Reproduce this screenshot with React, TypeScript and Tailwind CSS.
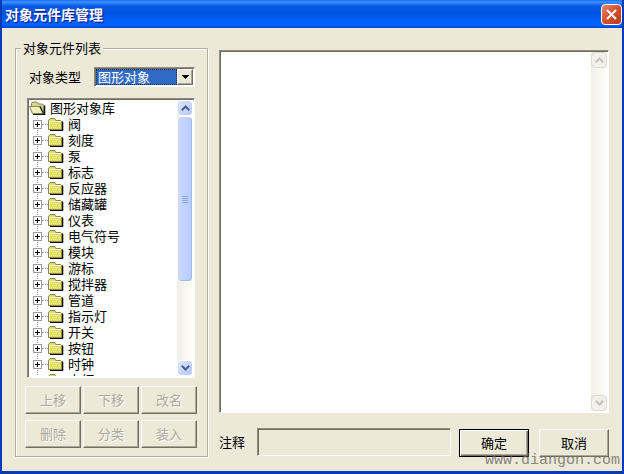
import { useState } from 'react'
import clsx from 'clsx'

const GROUPS = [
  '阀', '刻度', '泵', '标志', '反应器', '储藏罐', '仪表', '电气符号', '模块',
  '游标', '搅拌器', '管道', '指示灯', '开关', '按钮', '时钟', '电灯',
]

const ACTIONS = ['上移', '下移', '改名', '删除', '分类', '装入']

const SUNKEN = 'border border-t-[#8d8a7b] border-l-[#8d8a7b] border-r-white border-b-white shadow-[inset_1px_1px_0_#716f64]'
const RAISED = 'border border-t-white border-l-white border-r-[#716f64] border-b-[#716f64] shadow-[inset_-1px_-1px_0_#aca899]'

function FolderIcon() {
  return (
    <svg width="16" height="14" viewBox="0 0 16 14" className="shrink-0">
      <path d="M2 13.5h12.5V4.5" fill="none" stroke="#111" strokeWidth="1.6" />
      <path d="M.5 12.5v-9l1.5-2h4.5l1.5 2h4.5l1 1v8z" fill="#dfdc5e" stroke="#85854c" />
      <path d="M1.5 11.5V4.5h11" fill="none" stroke="#f8f8c4" />
      <path
        d="M3 6.5h10M4 8.5h9M3 10.5h10"
        stroke="#f3f1a0"
        strokeDasharray="1 1"
        shapeRendering="crispEdges"
      />
    </svg>
  )
}

function OpenFolderIcon() {
  return (
    <svg width="17" height="14" viewBox="0 0 17 14" className="shrink-0">
      <path d="M4 13.2h11.5V4.5" fill="none" stroke="#111" strokeWidth="1.6" />
      <path d="M2.5 11V2.5l1-1.5H8l1.5 2h4l1 1v8.500z" fill="#d6d48c" stroke="#85855a" />
      <path d="M.5 5.500h10.500l3.500 7H3.500z" fill="#efeeb4" stroke="#85855a" />
      <path d="M11 5.500l3.500 7" stroke="#222" strokeWidth="1.4" />
    </svg>
  )
}

function PlusBox() {
  return (
    <svg width="9" height="9" viewBox="0 0 9 9" shapeRendering="crispEdges" className="shrink-0">
      <rect x=".5" y=".5" width="8" height="8" fill="#fff" stroke="#9a9a9a" />
      <path d="M2 4.500h5M4.500 2v5" stroke="#000" />
    </svg>
  )
}

function Chevron({ up }: { up?: boolean }) {
  return (
    <svg width="9" height="6" viewBox="0 0 9 6" fill="none" stroke="currentColor" strokeWidth="2">
      <path d={up ? 'M.8 5.2 4.500 1.500l3.700 3.700' : 'M.8.8l3.700 3.700L8.200.8'} />
    </svg>
  )
}

function ScrollButton({ up, disabled }: { up?: boolean; disabled?: boolean }) {
  return (
    <button
      type="button"
      aria-label={up ? '向上滚动' : '向下滚动'}
      disabled={disabled}
      className={clsx(
        'w-4 h-4 shrink-0 flex items-center justify-center rounded-sm border',
        disabled
          ? 'bg-[#f2f0e8] border-[#dedbd0] text-[#c4c2b8]'
          : 'bg-gradient-to-br from-[#dbe5fe] to-[#b5c8f8] border-white text-[#4d6185]'
      )}
    >
      <Chevron up={up} />
    </button>
  )
}

function TitleBar() {
  return (
    <header className="h-7 shrink-0 flex items-center justify-between pl-[3px] bg-[linear-gradient(#1c6cf0_0,#3a93ff_2px,#0a5be6_6px,#0053e1_50%,#0062fb_75%,#0062fb_90%,#003dd0_100%)]">
      <h1 className="text-sm font-bold text-white [text-shadow:1px_1px_1px_#0f1089]">对象元件库管理</h1>
      <button
        type="button"
        aria-label="关闭"
        className="w-[21px] h-[21px] flex items-center justify-center rounded-sm border border-white bg-gradient-to-br from-[#e58468] via-[#d6502f] to-[#b93a1a]"
      >
        <svg width="11" height="11" viewBox="0 0 11 11" stroke="#fff" strokeWidth="2">
          <path d="M1 1l9 9M10 1l-9 9" />
        </svg>
      </button>
    </header>
  )
}

function ObjectTree() {
  return (
    <div className={clsx('h-[280px] mt-[11px] p-px flex bg-white', SUNKEN)}>
      <ul className="flex-1 overflow-hidden leading-4">
        <li>
          <div className="h-4 flex items-center gap-1">
            <OpenFolderIcon />
            <span>图形对象库</span>
          </div>
          <ul>
            {GROUPS.map(name => (
              <li key={name} className="h-4 flex items-center pl-1 bg-[repeating-linear-gradient(#999_0_1px,transparent_1px_2px)] bg-[length:1px_100%] bg-[position:8px_0] bg-no-repeat">
                <PlusBox />
                <span className="w-1.5 border-t border-dotted border-[#999]" />
                <FolderIcon />
                <span className="pl-1">{name}</span>
              </li>
            ))}
          </ul>
        </li>
      </ul>
      <div className="w-4 shrink-0 flex flex-col bg-gradient-to-r from-[#f0eee6] to-[#fefefb]">
        <ScrollButton up />
        <div className="h-[166px] flex flex-col items-center justify-center gap-px rounded-sm border border-white bg-gradient-to-r from-[#cbdafe] to-[#b7cbfb] shadow-[inset_-1px_-1px_0_#a3b9f0]">
          {[0, 1, 2, 3].map(i => (
            <span key={i} className="w-1.5 h-px bg-[#8fa9e8]" />
          ))}
        </div>
        <div className="flex-1" />
        <ScrollButton />
      </div>
    </div>
  )
}

export default function App() {
  const [type, setType] = useState('图形对象')
  const [note, setNote] = useState('')

  return (
    <div className="relative min-h-screen flex flex-col bg-[#ece9d8] border-x-2 border-b-3 border-[#0a3bb5] text-[13px] text-black font-['Noto_Sans_CJK_SC',sans-serif]">
      <TitleBar />

      <main className="flex-1 flex gap-[11px] pt-[13px] pb-3.5 px-[13px]">
        <fieldset className="w-[193px] shrink-0 border border-[#b3af9f] shadow-[inset_1px_1px_0_#fff,1px_1px_0_#fff] pl-[9px] pr-2.5">
          <legend className="-ml-1 px-0.5 leading-3.5 bg-[#ece9d8]">对象元件列表</legend>

          <div className="pt-3 px-0.5">
            <div className="flex items-center justify-between pl-0.5">
              <label htmlFor="type">对象类型</label>
              <div className={clsx('w-[101px] h-5 p-px flex bg-white', SUNKEN)}>
                <select
                  id="type"
                  value={type}
                  onChange={e => setType(e.target.value)}
                  className="flex-1 min-w-0 px-px appearance-none bg-[#316ac5] text-white leading-3.5 border border-dotted border-[#1c2c4a] outline-none"
                >
                  <option>图形对象</option>
                </select>
                <span className={clsx('w-4 shrink-0 flex items-center justify-center bg-[#ece9d8] pointer-events-none', RAISED)}>
                  <svg width="7" height="4" viewBox="0 0 7 4" shapeRendering="crispEdges">
                    <path d="M0 0h7L3.500 4z" />
                  </svg>
                </span>
              </div>
            </div>
            <ObjectTree />
          </div>

          <div className="grid grid-cols-3 gap-x-0.5 gap-y-1.5 mt-2">
            {ACTIONS.map(label => (
              <button key={label} type="button" disabled className={clsx('h-7 text-[#aca899] [text-shadow:1px_1px_0_#fff]', RAISED)}>
                {label}
              </button>
            ))}
          </div>
        </fieldset>

        <section className="flex-1 min-w-0 flex flex-col pt-[9px]">
          <div className={clsx('flex-1 p-px flex bg-white', SUNKEN)}>
            <textarea aria-label="预览" readOnly className="flex-1 min-w-0 resize-none outline-none" />
            <div className="w-4 shrink-0 flex flex-col justify-between bg-gradient-to-r from-[#f0eee6] to-[#fefefb]">
              <ScrollButton up disabled />
              <ScrollButton disabled />
            </div>
          </div>

          <div className="flex items-center mt-3.5">
            <label htmlFor="note" className="w-[38px] shrink-0">注释</label>
            <input
              id="note"
              value={note}
              onChange={e => setNote(e.target.value)}
              className={clsx('flex-1 min-w-0 h-7 px-1 outline-none', SUNKEN)}
            />
            <div className="flex gap-2.5 ml-2 mt-0.5">
              <button type="button" className="w-[70px] h-7 border border-black shadow-[inset_1px_1px_0_#fff,inset_-1px_-1px_0_#716f64,inset_-2px_-2px_0_#aca899]">
                确定
              </button>
              <button type="button" className={clsx('w-[70px] h-7', RAISED)}>取消</button>
            </div>
          </div>
        </section>
      </main>

      <span className="absolute right-0.5 bottom-0.5 text-[15px] leading-4 text-[#6b6b66]/80 font-['Liberation_Mono',monospace] pointer-events-none">
        www.diangon.com
      </span>
    </div>
  )
}
